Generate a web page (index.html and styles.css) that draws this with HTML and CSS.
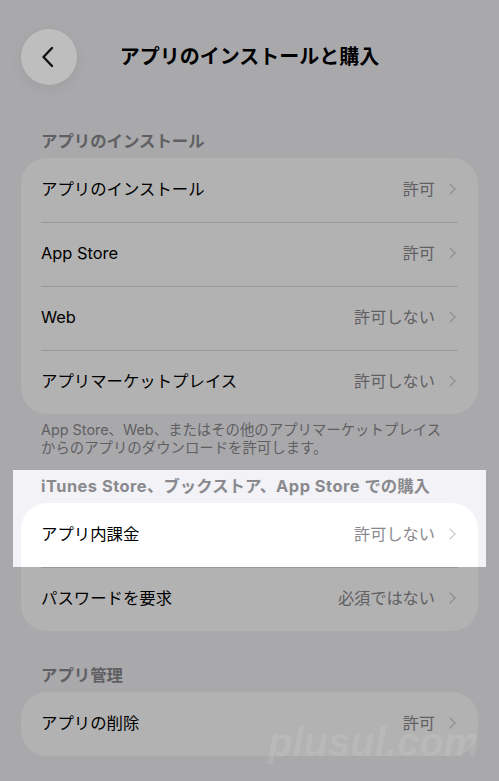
FILE: index.html
```html
<!DOCTYPE html>
<html lang="ja">
<head>
<meta charset="utf-8">
<title>アプリのインストールと購入</title>
<link rel="stylesheet" href="styles.css">
</head>
<body>
<div class="screen">
  <header class="nav">
    <button class="back" aria-label="戻る">
      <svg width="14" height="22" viewBox="0 0 14 22"><path d="M11 2 L2.5 11 L11 20" fill="none" stroke="#111" stroke-width="2.4" stroke-linecap="round" stroke-linejoin="round"/></svg>
    </button>
    <h1 class="nav-title">アプリのインストールと購入</h1>
    <span class="nav-spacer"></span>
  </header>

  <section class="group group-first">
    <h2 class="group-label">アプリのインストール</h2>
    <div class="card">
      <div class="row"><div class="row-inner"><span class="row-title">アプリのインストール</span><span class="row-value">許可</span><span class="chev"></span></div></div>
      <div class="row"><div class="row-inner"><span class="row-title">App Store</span><span class="row-value">許可</span><span class="chev"></span></div></div>
      <div class="row"><div class="row-inner"><span class="row-title">Web</span><span class="row-value">許可しない</span><span class="chev"></span></div></div>
      <div class="row"><div class="row-inner"><span class="row-title">アプリマーケットプレイス</span><span class="row-value">許可しない</span><span class="chev"></span></div></div>
    </div>
    <p class="group-footer">App Store、Web、またはその他のアプリマーケットプレイス<br>からのアプリのダウンロードを許可します。</p>
  </section>

  <section class="group group-purchase">
    <h2 class="group-label"><span class="latin">iTunes Store</span>、ブックストア、<span class="latin">App Store </span>での購入</h2>
    <div class="card">
      <div class="row"><div class="row-inner"><span class="row-title">アプリ内課金</span><span class="row-value">許可しない</span><span class="chev"></span></div></div>
      <div class="row"><div class="row-inner"><span class="row-title">パスワードを要求</span><span class="row-value">必須ではない</span><span class="chev"></span></div></div>
    </div>
  </section>

  <section class="group group-manage">
    <h2 class="group-label">アプリ管理</h2>
    <div class="card">
      <div class="row"><div class="row-inner"><span class="row-title">アプリの削除</span><span class="row-value">許可</span><span class="chev"></span></div></div>
    </div>
  </section>

  <div class="spotlight"></div>
  <div class="watermark">plusul.com</div>
</div>
</body>
</html>
```

FILE: styles.css
```css
* { box-sizing: border-box; }

html, body {
  margin: 0;
  padding: 0;
}

body {
  background: #f2f2f7;
  font-family: "Inter", "Noto Sans CJK JP", sans-serif;
  color: #000;
  overflow: hidden;
}

.screen {
  position: relative;
  width: 499px;
  height: 781px;
  overflow: hidden;
}

/* navigation bar */
.nav {
  display: grid;
  grid-template-columns: 56px 1fr 56px;
  align-items: center;
  padding: 29px 21px 0;
  height: 85px;
}

.back {
  position: relative;
  z-index: 6;
  width: 56px;
  height: 56px;
  border: none;
  border-radius: 50%;
  background: #bebebf;
  box-shadow: 0 4px 14px rgba(0, 0, 0, 0.06);
  display: flex;
  align-items: center;
  justify-content: center;
  padding: 0 3px 0 0;
}

.nav-title {
  margin: 0;
  text-align: center;
  font-size: 20px;
  font-weight: 700;
  line-height: 28px;
  letter-spacing: 0;
}

/* grouped sections */
.group-label {
  margin: 0 0 7px;
  padding: 0 41px;
  font-size: 16.4px;
  line-height: 20px;
  font-weight: 700;
  color: #8a8a8e;
}

.group-label .latin {
  letter-spacing: 0.5px;
}

.group-first { margin-top: 46px; }
.group-purchase { margin-top: 19px; }
.group-manage { margin-top: 34px; }

.card {
  margin: 0 21px;
  background: #fff;
  border-radius: 26px;
}

.row {
  height: 64px;
  padding: 0 20px;
}

.row-inner {
  height: 100%;
  display: flex;
  align-items: center;
  padding-bottom: 2px;
}

.row + .row .row-inner {
  border-top: 1px solid #dcdce0;
  padding-bottom: 3px;
}

.row-title {
  flex: 1;
  font-size: 16.4px;
  line-height: 22px;
}

.row-value {
  font-size: 16.2px;
  line-height: 22px;
  color: #8a8a8e;
}

.chev {
  width: 8px;
  height: 8px;
  margin: 0 4px 0 11px;
  border-top: 1.7px solid #c2c2c6;
  border-right: 1.7px solid #c2c2c6;
  transform: rotate(45deg);
}

.group-footer {
  margin: 7px 0 0;
  padding: 0 41px;
  font-size: 14.4px;
  line-height: 18px;
  color: #8a8a8e;
}

/* dimmed screen with the purchase row left bright */
.spotlight {
  position: absolute;
  z-index: 5;
  left: 13px;
  top: 470px;
  width: 473px;
  height: 97px;
  box-shadow: 0 0 0 2000px rgba(0, 0, 0, 0.3);
  pointer-events: none;
}

.watermark {
  position: absolute;
  z-index: 7;
  left: 268px;
  top: 720px;
  font-family: "Liberation Sans", sans-serif;
  font-style: italic;
  font-weight: 700;
  font-size: 40px;
  color: rgba(255, 255, 255, 0.09);
  pointer-events: none;
}
```
